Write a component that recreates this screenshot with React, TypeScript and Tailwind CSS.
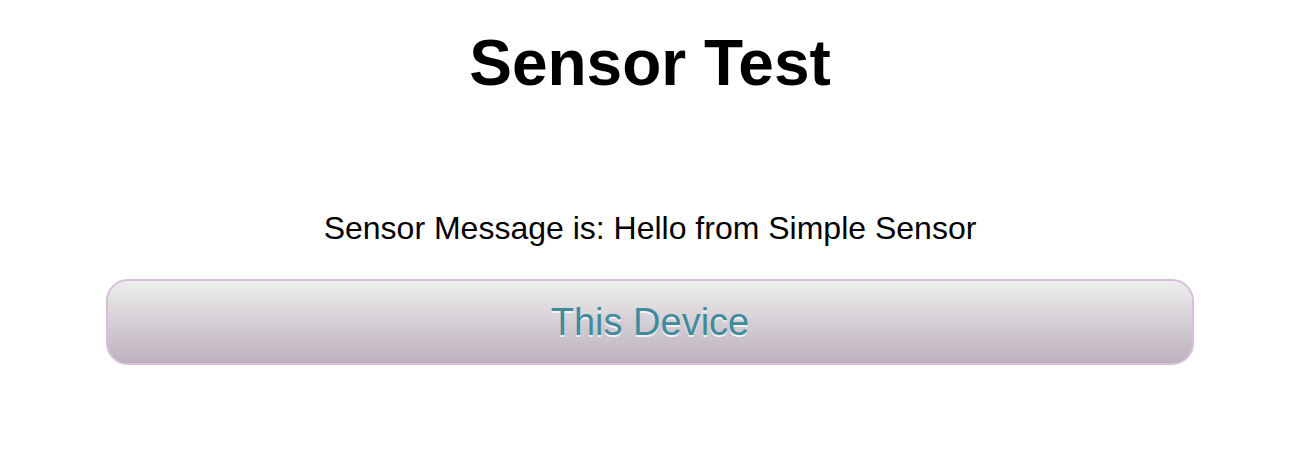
export default function App() {
  return (
    <div className="min-h-[462px] bg-white pl-[4px] font-['Liberation_Sans',Arial,sans-serif] text-black">
      <div className="flex flex-col items-center">
        <h1 className="mt-[26px] text-[64px] font-bold leading-[74px]">Sensor Test</h1>
        <p className="mt-[110px] text-[32px] leading-[37px]">Sensor Message is: Hello from Simple Sensor</p>
        <button
          type="button"
          className="mt-[32px] h-[86px] w-[1088px] rounded-[22px] border-2 border-[#d6bfd8] bg-gradient-to-b from-[#eeeeee] to-[#bcb1bc] text-[38px] text-[#3f8b9b] [text-shadow:0_2px_0_#f2f2fa]"
        >
          This Device
        </button>
      </div>
    </div>
  )
}
